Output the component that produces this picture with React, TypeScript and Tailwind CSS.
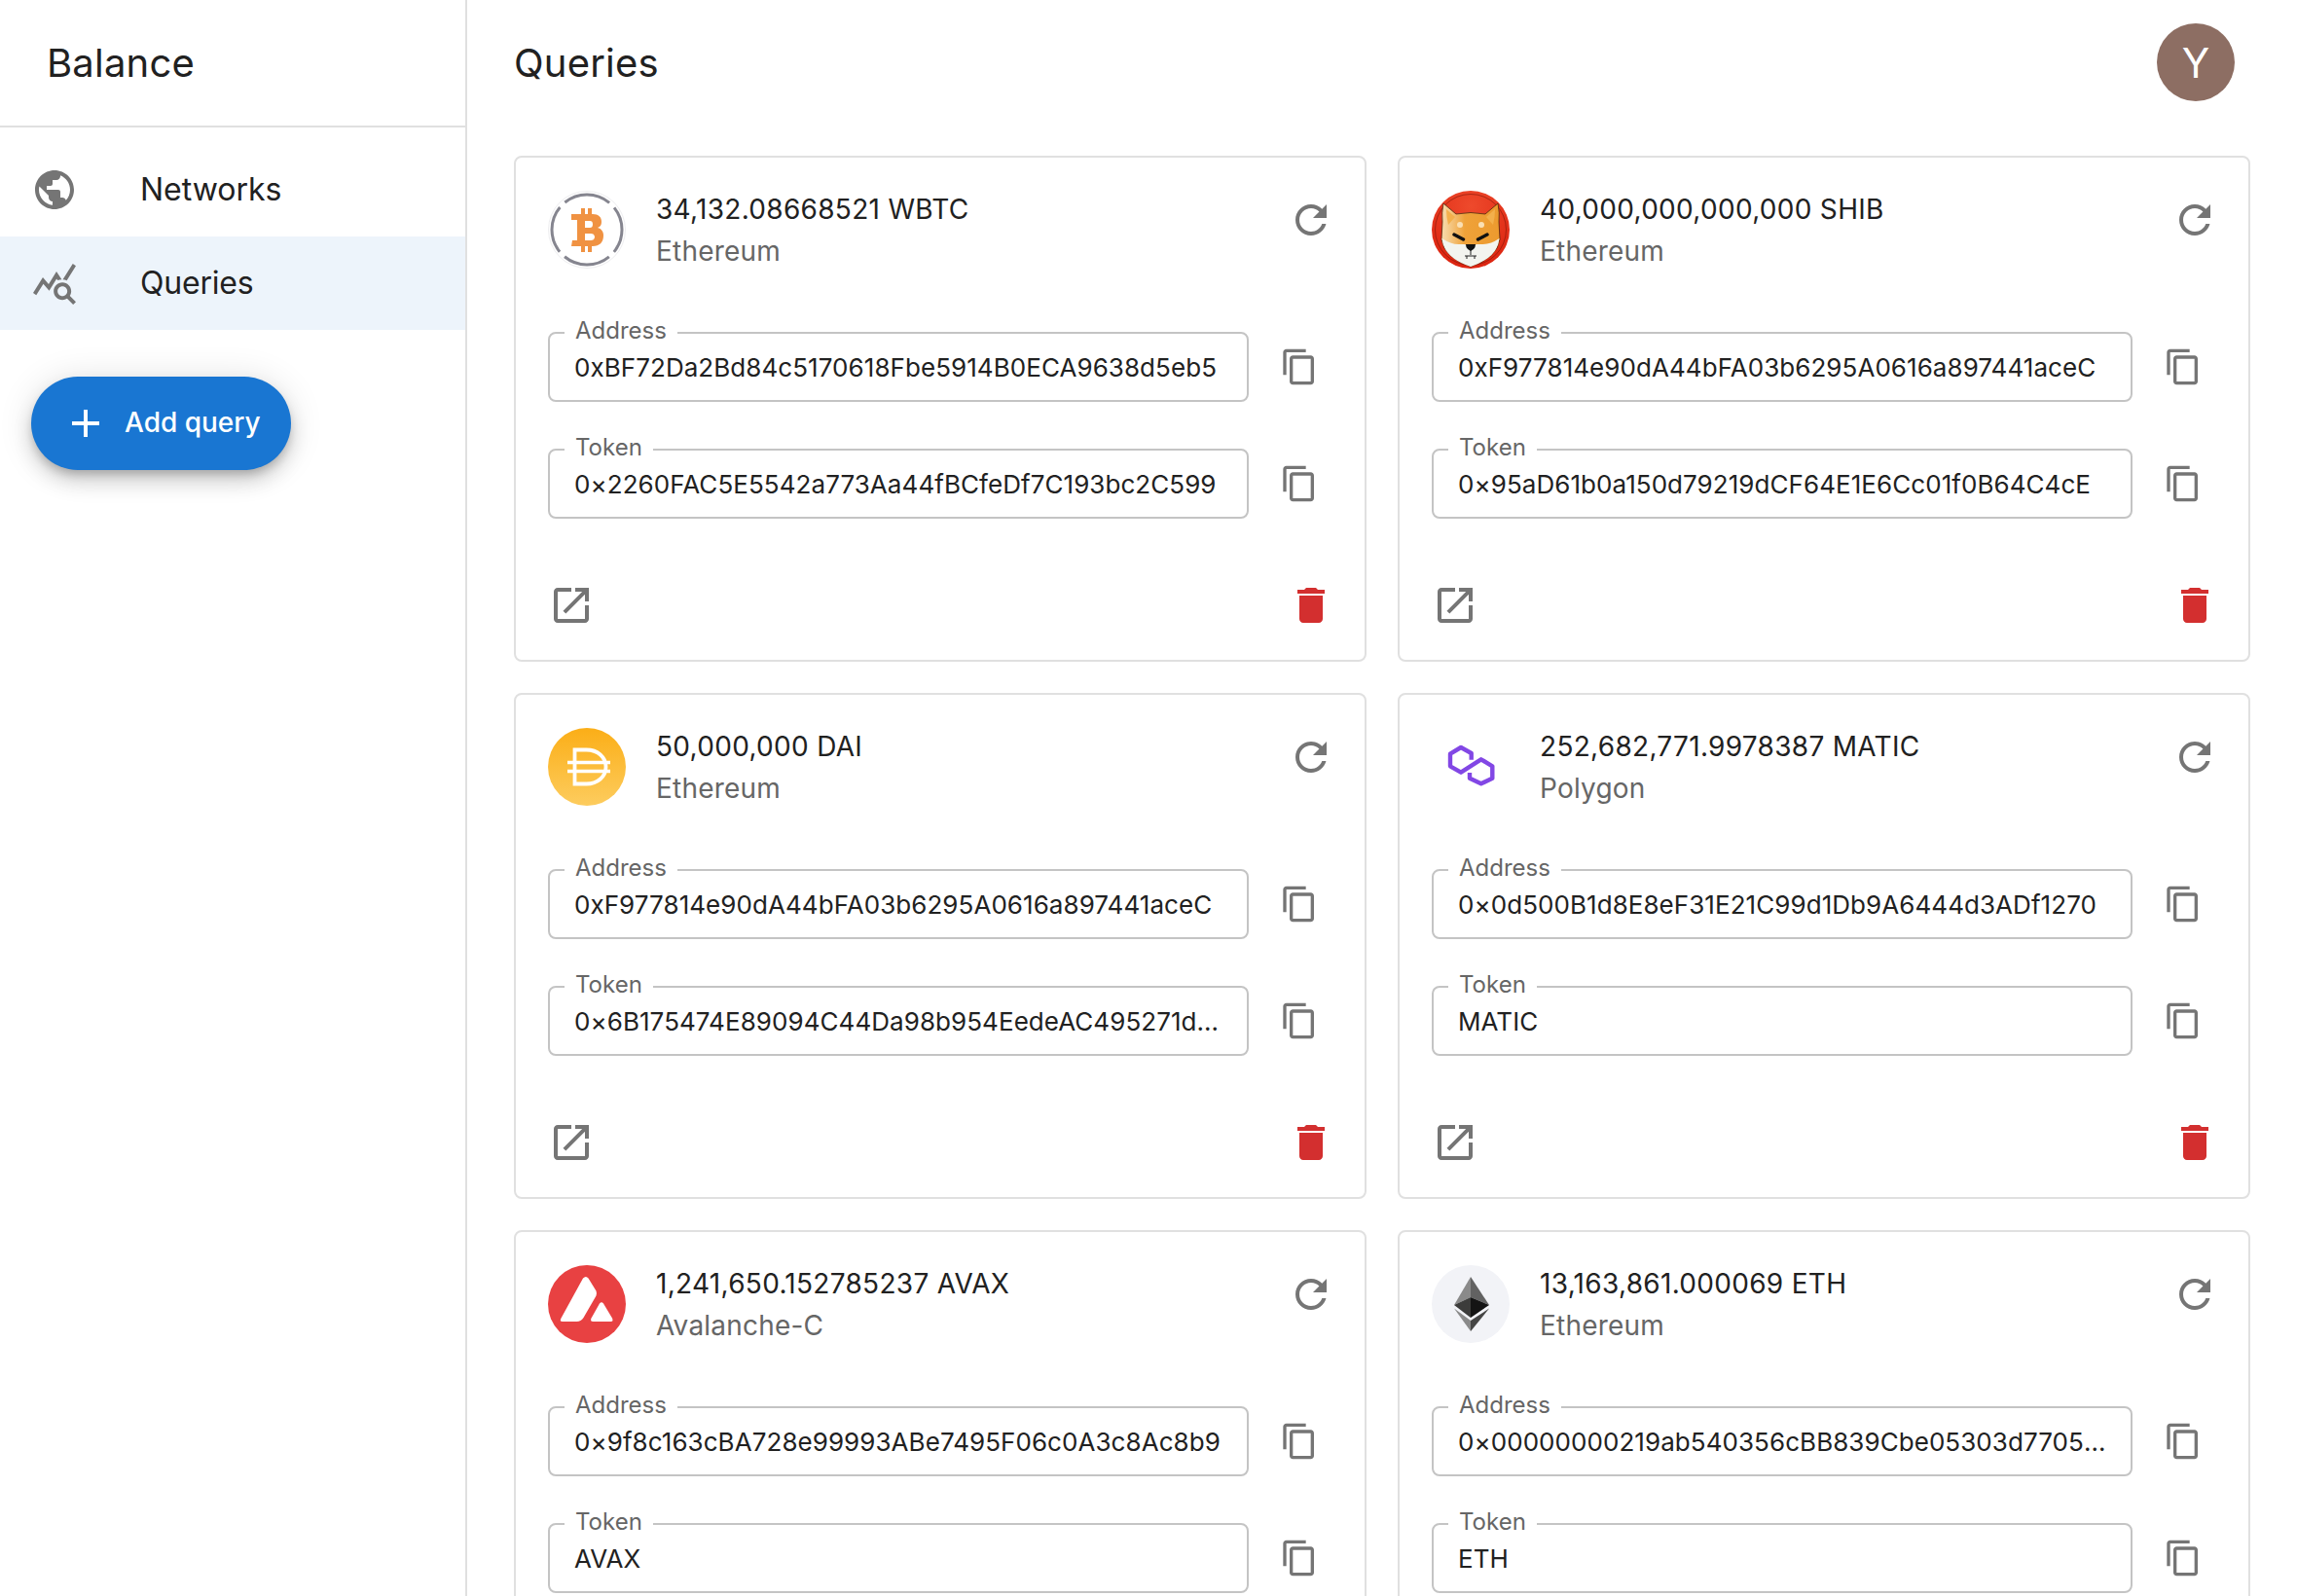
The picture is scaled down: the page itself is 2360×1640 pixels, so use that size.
import React from "react";

const Icon = ({ d, className }: { d: string; className: string }) => (
  <svg viewBox="0 0 24 24" fill="currentColor" className={className}>
    <path d={d} />
  </svg>
);

const publicIcon =
  "M12 2C6.48 2 2 6.48 2 12s4.48 10 10 10 10-4.48 10-10S17.52 2 12 2zm-1 17.93c-3.95-.49-7-3.85-7-7.93 0-.62.08-1.21.21-1.79L9 15v1c0 1.1.9 2 2 2v1.93zm6.9-2.54c-.26-.81-1-1.39-1.9-1.39h-1v-3c0-.55-.45-1-1-1H8v-2h2c.55 0 1-.45 1-1V7h2c1.1 0 2-.9 2-2v-.41c2.93 1.19 5 4.06 5 7.41 0 2.08-.8 3.97-2.1 5.39z";
const queryStats =
  "M19.88 18.47c.44-.7.7-1.51.7-2.39 0-2.49-2.01-4.5-4.5-4.5s-4.5 2.01-4.5 4.5 2.01 4.5 4.49 4.5c.88 0 1.7-.26 2.39-.7L21.58 23 23 21.58l-3.12-3.11zm-3.8.11c-1.38 0-2.5-1.12-2.5-2.5s1.12-2.5 2.5-2.5 2.5 1.12 2.5 2.5-1.12 2.5-2.5 2.5zm-.36-8.5c-.74.02-1.45.18-2.1.45l-.55-.83-3.8 6.18-3.01-3.52-3.63 5.81L1 17l5-8 3 3.5L13 6l2.72 4.08zm2.59.5c-.64-.28-1.33-.45-2.05-.49L21.38 2 23 3.18l-4.69 7.4z";
const addIcon = "M19 13h-6v6h-2v-6H5v-2h6V5h2v6h6v2z";
const refreshIcon =
  "M17.65 6.35C16.2 4.9 14.21 4 12 4c-4.42 0-7.99 3.58-7.99 8s3.57 8 7.99 8c3.73 0 6.84-2.55 7.73-6h-2.08c-.82 2.33-3.04 4-5.65 4-3.31 0-6-2.69-6-6s2.69-6 6-6c1.66 0 3.14.69 4.22 1.78L13 11h7V4l-2.35 2.35z";
const copyIcon =
  "M16 1H4c-1.1 0-2 .9-2 2v14h2V3h12V1zm3 4H8c-1.1 0-2 .9-2 2v14c0 1.1.9 2 2 2h11c1.1 0 2-.9 2-2V7c0-1.1-.9-2-2-2zm0 16H8V7h11v14z";
const openIcon =
  "M19 19H5V5h7V3H5c-1.11 0-2 .9-2 2v14c0 1.1.89 2 2 2h14c1.1 0 2-.9 2-2v-7h-2v7zM14 3v2h3.59l-9.83 9.83 1.41 1.41L19 6.41V10h2V3h-7z";
const deleteIcon =
  "M6 19c0 1.1.9 2 2 2h8c1.1 0 2-.9 2-2V7H6v12zM19 4h-3.5l-1-1h-5l-1 1H5v2h14V4z";

const WbtcLogo = () => (
  <svg viewBox="0 0 80 80" className="w-20 h-20">
    <circle cx="40" cy="40" r="39.500" fill="none" stroke="#eeeef0" strokeWidth="1" />
    <circle cx="40" cy="40" r="36" fill="none" stroke="#85858f" strokeWidth="3" strokeDasharray="49.500 7.050" strokeDashoffset="24.750" />
    <path fillRule="evenodd" fill="#f09242" d="M24 24H46c6 0 9 3 9 8 0 3-1 5-4 6 4 1 6 4 6 8 0 7-4 11-11 11H24l1-6h5V30h-6zM38 31v7h5c2 0 3-1 3-3.500S45 31 43 31zM38 44v7h6c2 0 4-1 4-3.500S46 44 44 44z" />
    <path fill="#f09242" d="M34 18h4v7h-4zM41 18h4v7h-4zM34 56h4v7h-4zM41 56h4v7h-4z" />
  </svg>
);

const ShibLogo = () => (
  <svg viewBox="0 0 80 80" className="w-20 h-20">
    <defs>
      <radialGradient id="shibRed" cx="0.5" cy="0.2" r="0.8">
        <stop offset="0" stopColor="#ee4a2c" />
        <stop offset="1" stopColor="#dc2410" />
      </radialGradient>
      <linearGradient id="shibFur" x1="0" y1="0" x2="1" y2="0">
        <stop offset="0.05" stopColor="#f7d7a3" />
        <stop offset="0.4" stopColor="#efa239" />
        <stop offset="1" stopColor="#ec9a2e" />
      </linearGradient>
    </defs>
    <circle cx="40" cy="40" r="40" fill="url(#shibRed)" />
    <circle cx="40" cy="40" r="36.500" fill="none" stroke="#7e1508" strokeWidth="0.6" />
    <path d="M12 13l13 11q15-3 30 0l13-11q2 10 1 19l1 18q-3 19-30 28q-27-9-30-28l1-18q-1-9 1-19z" fill="url(#shibFur)" stroke="#3a1d0b" strokeWidth="0.7" />
    <path d="M15 19l9 8-7 8q-2-8-2-16zM65 19l-9 8 7 8q2-8 2-16z" fill="#f3b04c" />
    <path d="M10.500 49q9 6 17 6l6 0 6.500 2 6.500-2 6 0q8 0 17-6q-2 20-29.500 29q-27.500-9-29.500-29z" fill="#f3f4ef" />
    <circle cx="29" cy="35" r="3" fill="#fae0b4" />
    <circle cx="51" cy="35" r="3" fill="#fae0b4" />
    <path d="M23 45l9.500 5M57 45l-9.500 5" stroke="#111" strokeWidth="3.400" strokeLinecap="round" />
    <path d="M35 55h10q0 5-5 7q-5-2-5-7z" fill="#111" />
    <path d="M40 61v5M34 67h12M36 67v3M44 67v3" stroke="#222" strokeWidth="1" fill="none" />
  </svg>
);

const DaiLogo = () => (
  <svg viewBox="0 0 80 80" className="w-20 h-20">
    <defs>
      <linearGradient id="daiFill" x1="0" y1="0" x2="0" y2="1">
        <stop offset="0" stopColor="#fbae17" />
        <stop offset="1" stopColor="#fdcc5e" />
      </linearGradient>
    </defs>
    <circle cx="40" cy="40" r="40" fill="url(#daiFill)" />
    <path d="M27.500 22.500h12c11.500 0 20 7.500 20 17.500s-8.500 17.500-20 17.500h-12z" fill="none" stroke="#fff" strokeWidth="3.800" />
    <path d="M20 35.500h44M20 44.500h44" stroke="#fff" strokeWidth="3.600" />
  </svg>
);

const MaticLogo = () => (
  <svg viewBox="0 0 80 80" className="w-20 h-20">
    <path d="M40.700 32.700V26L30 20l-11 6.700v12.600l11 6.400 20.700-13.400 11.600 7v12.400l-11.600 5.600-11.700-5.600V46" fill="none" stroke="#8247e5" strokeWidth="4.400" strokeLinejoin="round" />
  </svg>
);

const AvaxLogo = () => (
  <svg viewBox="0 0 80 80" className="w-20 h-20">
    <circle cx="40" cy="40" r="40" fill="#e84142" />
    <path d="M36 13.500q3-3 5.500 0l8 13q1 3 0 5L36.500 54q-2.500 4-7 4H15q-3.500 0-1.500-3.500z" fill="#fff" />
    <path d="M53 39.500q2-2.500 4 0l9 15q1.500 3.500-1.500 3.500h-18q-3.500 0-2-3.500z" fill="#fff" />
  </svg>
);

const EthLogo = () => (
  <svg viewBox="0 0 80 80" className="w-20 h-20">
    <circle cx="40" cy="40" r="40" fill="#f2f3f7" />
    <path d="M40 12L23 41l17-8z" fill="#8a8a8a" />
    <path d="M40 12l19 29-19-8z" fill="#626262" />
    <path d="M23 41l17-8v21z" fill="#3c3c3b" />
    <path d="M59 41L40 33v21z" fill="#141414" />
    <path d="M23 44.500L40 57v11z" fill="#8a8a8a" />
    <path d="M59 44.500L40 57v11z" fill="#454545" />
  </svg>
);

const Field = ({ label, value }: { label: string; value: string }) => (
  <div className="flex items-center">
    <div className="relative w-[720px] h-[72px] border-2 border-[#c4c4c4] rounded-lg flex items-center pl-[25px] pr-[22px]">
      <span className="absolute left-[15px] -top-[19px] bg-white px-[11px] text-2xl leading-8 text-[#666666]">{label}</span>
      <div className="truncate text-[26px] tracking-[0.06px] text-[#212121]">{value}</div>
    </div>
    <Icon d={copyIcon} className="w-10 h-10 ml-[32px] text-[#757575]" />
  </div>
);

const cards = [
  { logo: <WbtcLogo />, title: "34,132.08668521 WBTC", network: "Ethereum", address: "0xBF72Da2Bd84c5170618Fbe5914B0ECA9638d5eb5", token: "0×2260FAC5E5542a773Aa44fBCfeDf7C193bc2C599" },
  { logo: <ShibLogo />, title: "40,000,000,000,000 SHIB", network: "Ethereum", address: "0xF977814e90dA44bFA03b6295A0616a897441aceC", token: "0×95aD61b0a150d79219dCF64E1E6Cc01f0B64C4cE" },
  { logo: <DaiLogo />, title: "50,000,000 DAI", network: "Ethereum", address: "0xF977814e90dA44bFA03b6295A0616a897441aceC", token: "0×6B175474E89094C44Da98b954EedeAC495271d0F" },
  { logo: <MaticLogo />, title: "252,682,771.9978387 MATIC", network: "Polygon", address: "0×0d500B1d8E8eF31E21C99d1Db9A6444d3ADf1270", token: "MATIC" },
  { logo: <AvaxLogo />, title: "1,241,650.152785237 AVAX", network: "Avalanche-C", address: "0×9f8c163cBA728e99993ABe7495F06c0A3c8Ac8b9", token: "AVAX" },
  { logo: <EthLogo />, title: "13,163,861.000069 ETH", network: "Ethereum", address: "0×00000000219ab540356cBB839Cbe05303d7705Fa", token: "ETH" },
];

const QueryCard = ({ logo, title, network, address, token }: (typeof cards)[number]) => (
  <div className="h-[520px] border-2 border-[#e0e0e0] rounded-lg pl-[33px] pr-[31px] pt-[34px]">
    <div className="flex items-start h-20">
      {logo}
      <div className="ml-[31px] flex-1">
        <div className="-mt-px text-[28px] leading-10 tracking-[0.3px] text-[#212121]">{title}</div>
        <div className="mt-[3px] text-[28px] leading-10 tracking-[0.2px] text-[#666666]">{network}</div>
      </div>
      <Icon d={refreshIcon} className="w-12 h-12 mt-[6px] text-[#757575]" />
    </div>
    <div className="mt-[65px] flex flex-col gap-[48px]">
      <Field label="Address" value={address} />
      <Field label="Token" value={token} />
    </div>
    <div className="mt-[65px] flex justify-between">
      <Icon d={openIcon} className="w-12 h-12 text-[#757575]" />
      <Icon d={deleteIcon} className="w-12 h-12 text-[#d32f2f]" />
    </div>
  </div>
);

export default function App() {
  return (
    <div className="flex h-[1640px] overflow-hidden bg-white text-[#212121] [font-family:Inter,sans-serif]">
      <aside className="w-[480px] shrink-0 border-r-2 border-[#e0e0e0]">
        <div className="h-[131px] flex items-center pl-12 border-b-2 border-[#e0e0e0] text-[40px] tracking-[0.2px]">Balance</div>
        <nav className="pt-4">
          <div className="h-24 flex items-center pl-8">
            <Icon d={publicIcon} className="w-12 h-12 text-[#757575]" />
            <span className="ml-16 text-[32px]">Networks</span>
          </div>
          <div className="h-24 flex items-center pl-8 bg-[#edf4fb]">
            <Icon d={queryStats} className="w-12 h-12 text-[#757575]" />
            <span className="ml-16 text-[32px] tracking-[-0.2px]">Queries</span>
          </div>
        </nav>
        <button className="mt-12 ml-8 h-24 w-[267px] rounded-full bg-[#1976d2] text-white flex items-center pl-8 shadow-[0_6px_10px_-2px_rgba(0,0,0,0.2),0_12px_20px_0_rgba(0,0,0,0.14),0_2px_36px_0_rgba(0,0,0,0.12)]">
          <Icon d={addIcon} className="w-12 h-12" />
          <span className="ml-4 -mt-0.5 text-[28px] font-medium">Add query</span>
        </button>
      </aside>
      <main className="flex-1 px-12">
        <div className="h-[160px] pt-[25px] flex items-start justify-between">
          <h1 className="h-20 flex items-center text-[40px] tracking-[0.2px]">Queries</h1>
          <div className="-mt-px w-20 h-20 mr-4 rounded-full bg-[#8d6e63] flex items-center justify-center text-[42px] text-white">Y</div>
        </div>
        <div className="grid grid-cols-2 gap-8">
          {cards.map((card) => (
            <QueryCard key={card.title} {...card} />
          ))}
        </div>
      </main>
    </div>
  );
}
